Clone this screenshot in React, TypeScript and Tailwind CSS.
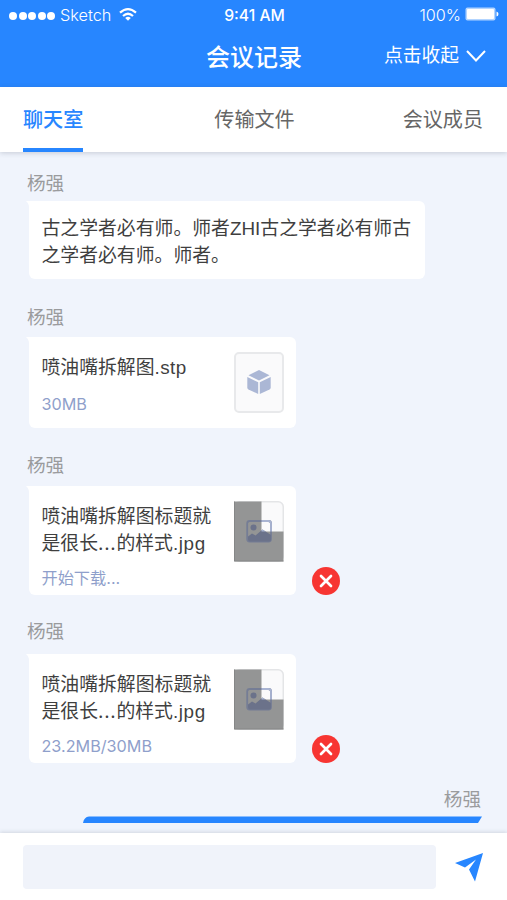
import type { ReactNode } from "react";

const TEXT = "text-[18.85px] leading-[27px] text-[#3f3f3f]";
const STATUS = "font-['Inter','Noto_Sans_CJK_SC',sans-serif] text-[16.2px] leading-[24px] whitespace-nowrap text-[#8f9fcb]";

function Name({ className = "" }: { className?: string }) {
  return <div className={`text-[18.6px] leading-[28px] text-[#9a9b9d] ${className}`}>杨强</div>;
}

function Bubble({ className, children }: { className: string; children: ReactNode }) {
  return (
    <div className={`relative ml-[29px] rounded-[6px] bg-white ${className}`}>
      <svg className="absolute top-0 -left-[3px]" width="10" height="9" viewBox="0 0 10 9">
        <path d="M0 0H10V9H3V6C3 3.500 1.800 1.500 0 0Z" fill="#fff" />
      </svg>
      {children}
    </div>
  );
}

function CubeThumb() {
  return (
    <div className="flex h-[61px] w-[50px] items-center justify-center rounded-[5px] border-[2px] border-[#e8e9eb] bg-[#fafafb] pb-[2px]">
      <svg width="24" height="24" viewBox="0 0 24 24" fill="#abb7d5">
        <path d="M12 0L22.500 5.300L12 10.600L1.500 5.300Z" />
        <path d="M.3 7L11.200 12.200V24L1.500 19.500Q.3 18.800 .3 17.500Z" />
        <path d="M23.700 7L12.800 12.200V24L22.500 19.500Q23.700 18.800 23.700 17.500Z" />
      </svg>
    </div>
  );
}

function ImageThumb() {
  return (
    <svg width="50" height="61" viewBox="0 0 50 61">
      <rect x=".75" y=".75" width="48.500" height="59.500" rx="5" fill="#fafafb" stroke="#e4e5e7" strokeWidth="1.500" />
      <path d="M0 .5H27.500V30.500H49.500V60.500H0Z" fill="#949595" />
      <path d="M.5 .5V60H49.500" fill="none" stroke="#808182" strokeOpacity=".7" />
      <g fill="#6b728a">
        <rect x="13.200" y="20" width="23.800" height="20.500" rx="2.500" fill="none" stroke="#757d95" strokeWidth="1.800" />
        <circle cx="19.500" cy="26.500" r="3" />
        <path d="M14 35.500L18 32.500L21.500 34.500L28.500 28.500L37 34V38.500Q37 40.500 35 40.500H16Q14 40.500 14 38.500Z" />
      </g>
      <path d="M27.500 20H34.500Q37 20 37 22.500V30.500" fill="none" stroke="#a9b4d2" strokeWidth="1.800" />
      <path d="M27.500 29.400L28.500 28.500L31.600 30.500H27.500Z" fill="#a9b4d2" />
    </svg>
  );
}

function CancelButton() {
  return (
    <button aria-label="取消" className="ml-[16px] flex size-[28px] shrink-0 items-center justify-center rounded-full bg-[#f73532]">
      <svg width="14" height="14" viewBox="0 0 14 14" fill="none" stroke="#fff" strokeWidth="2.700" strokeLinecap="round">
        <path d="M2 2L12 12M12 2L2 12" />
      </svg>
    </button>
  );
}

function Download({ status, className }: { status: string; className: string }) {
  return (
    <div className={`flex items-end ${className}`}>
      <Bubble className="flex h-[109px] w-[267px] justify-between pt-[16px] pr-[12px] pl-[12.5px]">
        <div className="pt-px">
          <div className={TEXT}>喷油嘴拆解图标题就</div>
          <div className={`${TEXT} whitespace-nowrap`}>
            是很长<span className="font-['Inter'] tracking-[0.7px]">...</span>的样式<span className="tracking-[0.6px]">.jpg</span>
          </div>
          <div className={`mt-[9px] ${STATUS}`}>{status}</div>
        </div>
        <div className="-mt-px"><ImageThumb /></div>
      </Bubble>
      <CancelButton />
    </div>
  );
}

export default function App() {
  return (
    <div className="flex h-[900px] w-[507px] flex-col overflow-hidden bg-[#f0f4fc] font-['Liberation_Sans','Noto_Sans_CJK_SC',sans-serif]">
      <header className="h-[87px] shrink-0 bg-[#2786ff] text-white">
        <div className="grid h-[31px] grid-cols-3 items-center pr-[8px] pl-[9px] font-['Inter','Liberation_Sans',sans-serif]">
          <div className="flex items-center">
            <div className="flex gap-[1.500px]">
              {[0, 1, 2, 3, 4].map((i) => <i key={i} className="size-[8px] shrink-0 rounded-full bg-white" />)}
            </div>
            <span className="ml-[5px] text-[16.300px] font-light">Sketch</span>
            <svg className="ml-[8px] -mt-[3px]" width="18" height="13" viewBox="0 0 18 13" fill="none" stroke="#fff" strokeWidth="2.200">
              <path d="M1 4.700Q9-2.300 17 4.700M4 8Q9 3.500 14 8" />
              <path d="M6.200 10Q9 7.600 11.800 10L9 12.700Z" fill="#fff" stroke="none" />
            </svg>
          </div>
          <div className="pl-px text-center text-[15.700px] font-medium">9:41 AM</div>
          <div className="flex items-center justify-end">
            <span className="text-[16.200px] font-light">100%</span>
            <svg className="ml-[4px] -mt-[3px]" width="34" height="14" viewBox="0 0 34 14" fill="#fff">
              <rect x=".5" y=".5" width="30" height="13" rx="2" fillOpacity=".65" />
              <rect x="2" y="2" width="27" height="10" rx="1" />
              <path d="M31.500 4.500Q33.500 5 33.500 7T31.500 9.500Z" />
            </svg>
          </div>
        </div>
        <div className="grid h-[52px] grid-cols-[1fr_auto_1fr] items-center pt-px pr-[21px] pl-[22px]">
          <span />
          <h1 className="text-[24px] leading-[36px] font-medium">会议记录</h1>
          <button className="-mt-[3px] flex items-center justify-end text-[18.800px] leading-[28px]">
            点击收起
            <svg className="ml-[7px]" width="20" height="12" viewBox="0 0 20 12" fill="none" stroke="#fff" strokeWidth="2">
              <path d="M1 1L10 10.500L19 1" />
            </svg>
          </button>
        </div>
      </header>
      <nav className="z-10 grid h-[65px] shrink-0 grid-cols-[1fr_auto_1fr] bg-white pr-[24px] pl-[23px] text-[20.100px] leading-[30px] text-[#666] shadow-[0_1px_5px_rgba(50,60,80,0.22)]">
        <div className="flex flex-col justify-between justify-self-start pt-[18px] font-medium text-[#2786ff]">
          聊天室<i className="h-[4px] bg-[#2786ff]" />
        </div>
        <div className="pt-[18px] pl-[3px]">传输文件</div>
        <div className="justify-self-end pt-[18px]">会议成员</div>
      </nav>
      <main className="h-[681px] shrink-0 overflow-hidden">
        <Name className="mt-[18px] pl-[27px]" />
        <Bubble className="mt-[3px] h-[78px] w-[396px] pt-[14px] pl-[12.5px]">
          <div className={`${TEXT} whitespace-nowrap`}>古之学者必有师。师者ZHI古之学者必有师古</div>
          <div className={TEXT}>之学者必有师。师者。</div>
        </Bubble>
        <Name className="mt-[25px] pl-[27px]" />
        <Bubble className="mt-[5px] flex h-[91px] w-[267px] justify-between pt-[16px] pr-[12px] pl-[12.5px]">
          <div className="pt-px">
            <div className={TEXT}>喷油嘴拆解图<span className="tracking-[0.4px]">.stp</span></div>
            <div className={`mt-[11px] ${STATUS}`}>30MB</div>
          </div>
          <div className="-mt-px"><CubeThumb /></div>
        </Bubble>
        <Name className="mt-[24px] pl-[27px]" />
        <Download className="mt-[6px]" status="开始下载..." />
        <Name className="mt-[23px] pl-[27px]" />
        <Download className="mt-[8px]" status="23.2MB/30MB" />
        <Name className="mt-[23px] pr-[26px] text-right" />
        <svg className="mt-[2px] ml-[83px]" width="400" height="8" viewBox="0 0 400 8">
          <path d="M0 7Q1 1 6 .5H399L395 7Z" fill="#2786ff" />
        </svg>
      </main>
      <footer className="z-10 flex h-[67px] shrink-0 items-center bg-white pl-[23px] shadow-[0_-1px_4px_rgba(50,60,80,0.16)]">
        <div className="h-[44px] w-[413px] rounded-[4px] bg-[#f0f3fa]" />
        <svg className="mt-[2px] ml-[19px]" width="29" height="29" viewBox="0 0 29 29" fill="#2786ff">
          <path d="M28 0L0 10L10 14.500L21 6.500L14 16.500L20 28.500Z" />
        </svg>
      </footer>
    </div>
  );
}
